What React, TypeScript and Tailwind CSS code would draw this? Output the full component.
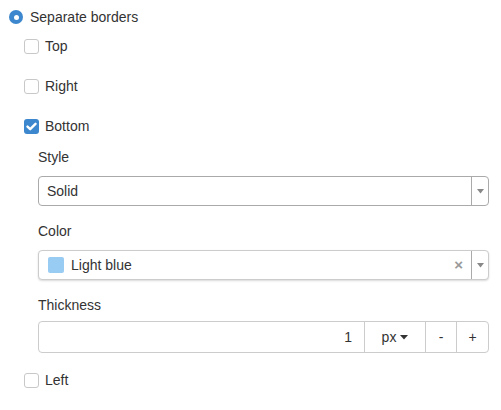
import React from 'react';

const Checkbox: React.FC<{ checked?: boolean; label: string; className?: string }> = ({ checked, label, className }) => (
  <div className={`flex items-center h-[20px] pl-[24px] ${className ?? ''}`}>
    {checked ? (
      <span className="w-[15px] h-[15px] rounded-[3px] bg-[#3c87cd] flex items-center justify-center">
        <svg width="11" height="9" viewBox="0 0 11 9">
          <path d="M1.5 4.6 L4.2 7.2 L9.5 1.8" fill="none" stroke="#fff" strokeWidth="2.4" strokeLinecap="round" strokeLinejoin="round" />
        </svg>
      </span>
    ) : (
      <span className="w-[15px] h-[15px] rounded-[3px] border border-[#c8c8c8] bg-white" />
    )}
    <span className="ml-[6px]">{label}</span>
  </div>
);

const Caret = () => (
  <svg width="7" height="5" viewBox="0 0 7 5">
    <path d="M0 0 L7 0 L3.5 4.5 Z" fill="#888" />
  </svg>
);

const App: React.FC = () => {
  return (
    <div className="w-[501px] h-[410px] bg-white text-[14px] text-[#333] font-['Liberation_Sans',Arial,sans-serif] leading-[20px] pt-[7px] pr-[12px]">
      <div className="flex items-center h-[20px] pl-[9px]">
        <span className="w-[14px] h-[14px] rounded-full bg-[#3c87cd] flex items-center justify-center">
          <span className="w-[5px] h-[5px] rounded-full bg-white" />
        </span>
        <span className="ml-[7px]">Separate borders</span>
      </div>

      <Checkbox label="Top" className="mt-[9px]" />
      <Checkbox label="Right" className="mt-[20px]" />
      <Checkbox label="Bottom" checked className="mt-[20px]" />

      <div className="pl-[38px]">
        <div className="mt-[11px] h-[20px]">Style</div>
        <div className="mt-[9px] h-[30px] flex items-center border border-[#aaa] rounded-[4px] bg-white">
          <span className="flex-1 pl-[8px]">Solid</span>
          <span className="w-[17px] h-full border-l border-[#aaa] flex items-center justify-center">
            <Caret />
          </span>
        </div>

        <div className="mt-[15px] h-[20px]">Color</div>
        <div className="mt-[9px] h-[30px] flex items-center border border-[#ccc] rounded-[4px] bg-white shadow-[0_1px_2px_rgba(0,0,0,0.15)]">
          <span className="ml-[9px] w-[16px] h-[16px] rounded-[2px] bg-[#99ccf3]" />
          <span className="flex-1 ml-[7px]">Light blue</span>
          <span className="text-[#999] text-[15px] font-bold mr-[8px]">×</span>
          <span className="w-[17px] h-full border-l border-[#aaa] flex items-center justify-center">
            <Caret />
          </span>
        </div>

        <div className="mt-[15px] h-[20px]">Thickness</div>
        <div className="mt-[6px] h-[32px] flex border border-[#ccc] rounded-[4px] bg-white">
          <span className="flex-1 flex items-center justify-end pr-[12px]">1</span>
          <span className="w-[61px] border-l border-[#ccc] flex items-center justify-center gap-[4px]">
            px
            <svg width="8" height="5" viewBox="0 0 8 5">
              <path d="M0 0 L8 0 L4 4.5 Z" fill="#333" />
            </svg>
          </span>
          <span className="w-[31px] border-l border-[#ccc] flex items-center justify-center">-</span>
          <span className="w-[32px] border-l border-[#ccc] flex items-center justify-center">+</span>
        </div>
      </div>

      <Checkbox label="Left" className="mt-[17px]" />
    </div>
  );
};

export default App;
